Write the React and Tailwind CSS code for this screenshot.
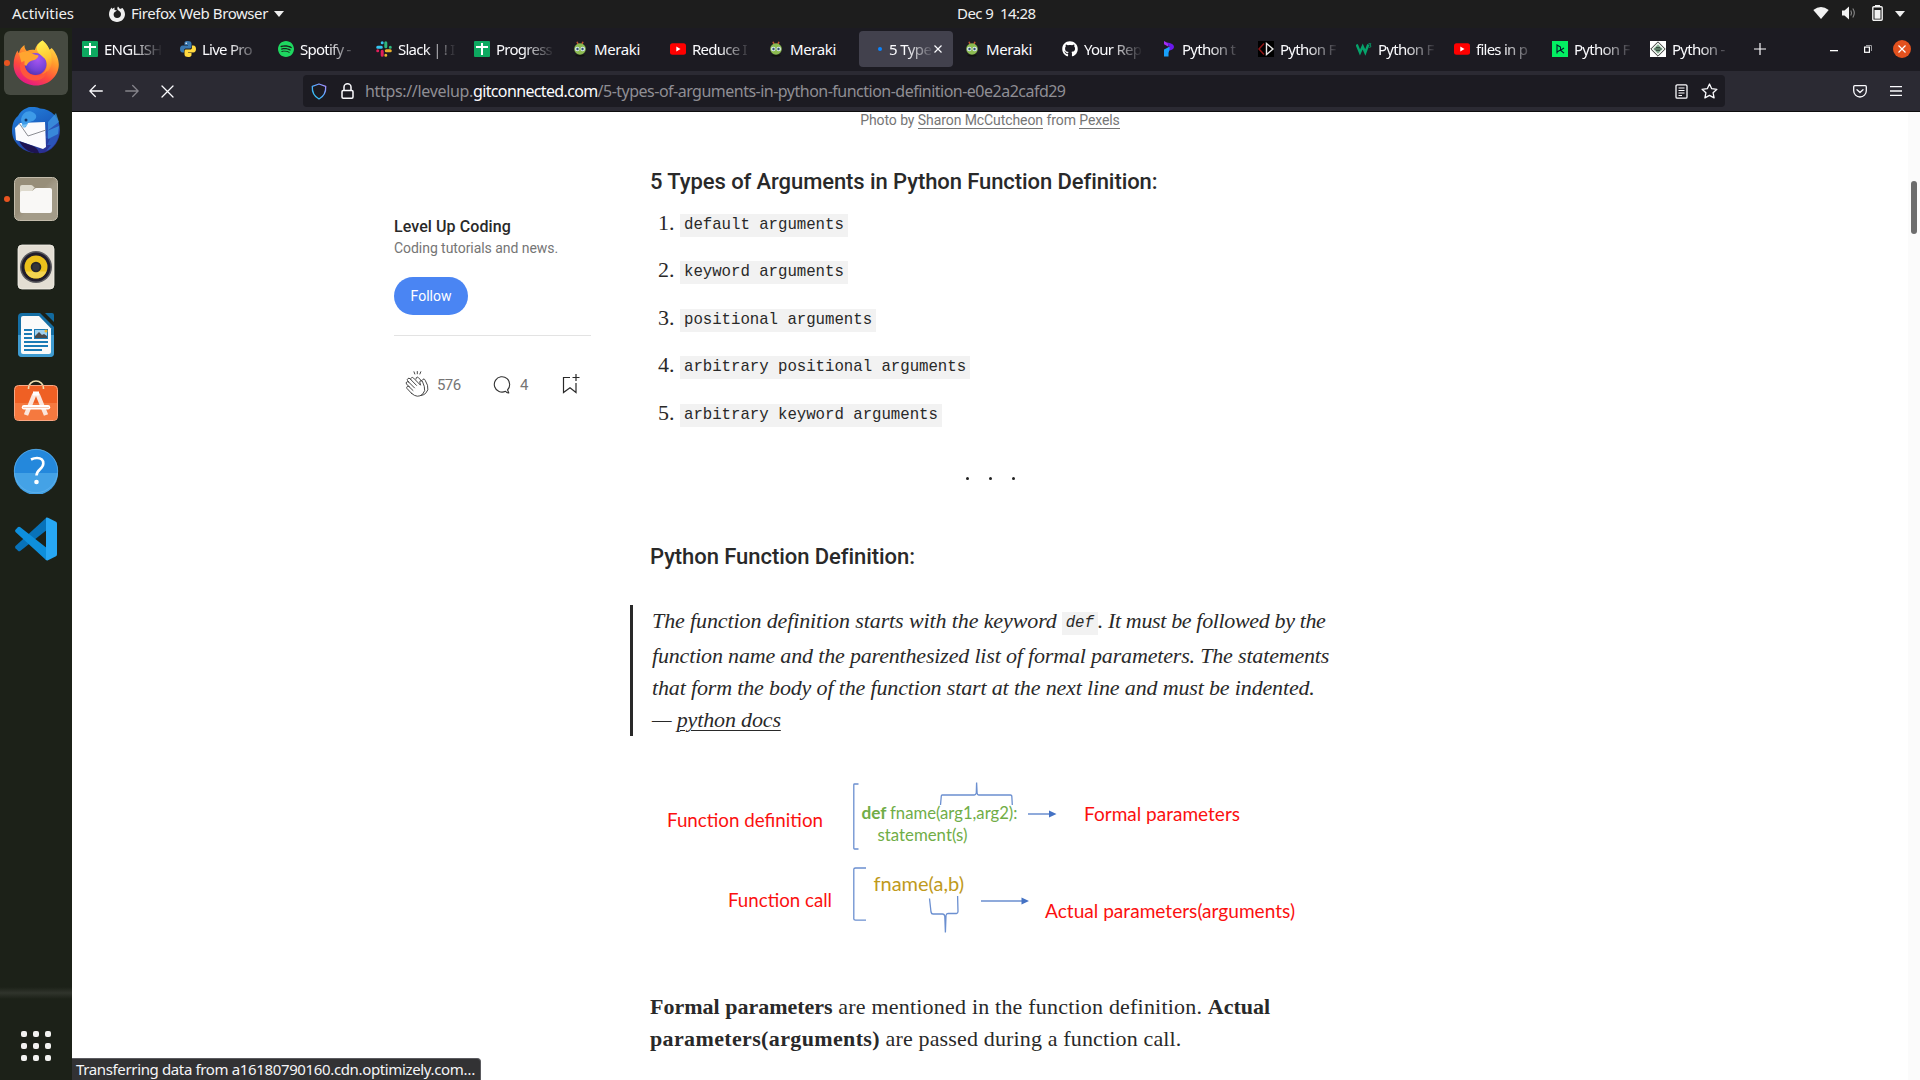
import React from "react";
import { FaGithub } from "react-icons/fa";
import { SiSpotify } from "react-icons/si";

const UI = "font-['Noto_Sans',sans-serif]";

/* ---------- dock icons ---------- */

function FirefoxIcon() {
  return (
    <svg width="48" height="48" viewBox="0 0 48 48">
      <defs>
        <linearGradient id="ffBody" x1="0.8" y1="0.05" x2="0.3" y2="1">
          <stop offset="0" stopColor="#ffe14a" />
          <stop offset="0.35" stopColor="#ff9a2c" />
          <stop offset="0.68" stopColor="#ff4a3d" />
          <stop offset="1" stopColor="#e3158a" />
        </linearGradient>
        <radialGradient id="ffGlobe" cx="0.6" cy="0.3" r="0.8">
          <stop offset="0" stopColor="#a655f0" />
          <stop offset="0.6" stopColor="#7543d6" />
          <stop offset="1" stopColor="#4a2fa8" />
        </radialGradient>
        <linearGradient id="ffFlame" x1="0.4" y1="0" x2="0.6" y2="1">
          <stop offset="0" stopColor="#fff250" />
          <stop offset="0.55" stopColor="#ffc733" />
          <stop offset="1" stopColor="#ff7a2e" />
        </linearGradient>
      </defs>
      <path d="M30.5 1.5c4 2.800 5.600 6 6.500 9.200 1.100-.4 2.100-.9 2.600-1.700 4.600 4.800 7.200 11 7.200 16.500 0 11.600-10 21-22.600 21S1.600 37.200 1.600 26c0-6.200 1.700-10.800 3.800-14.400.4 1 .8 2 1.500 2.700.7-3.800 2.600-6.200 5.500-8.300.1 2.700.8 4.700 2.400 5.900 2.500-1 5.400-1.300 8-.9 1-4 3.500-7.200 7.700-9.500z" fill="url(#ffBody)" />
      <circle cx="23.500" cy="25" r="11" fill="url(#ffGlobe)" />
      <path d="M30.500 1.500c8 7 9.500 14 9.200 22-.3 6-4.700 11-10.700 12.200 5-3 7-8 5.500-13-1-3.600-4.500-5-7.500-8.200-4-4.200-2-10 3.500-13z" fill="url(#ffFlame)" />
      <path d="M7 14.500c4-2.500 9.500-2.800 13.200.1 2.200 1.500 4.200 1.300 6.300 1.900-.2 2.600-3.200 4.600-6.500 5.100-2.400.6-4 2.400-5.600 5.200-2.600-.5-4.600-2.400-5.400-4.800z" fill="#ffa52f" />
      <path d="M12.500 22c-.6 9 4 14 11 14.500 5 .4 9-1.500 12-5-1 6-6 10-12.500 10-8 0-15-6-15-14 0-3 1.500-5 4.500-5.500z" fill="#ff5a3a" opacity="0.9" />
    </svg>
  );
}

function ThunderbirdIcon() {
  return (
    <svg width="48" height="48" viewBox="0 0 48 48">
      <defs>
        <linearGradient id="tbBody" x1="0.2" y1="0" x2="0.7" y2="1">
          <stop offset="0" stopColor="#2380dc" />
          <stop offset="0.5" stopColor="#1b5fc0" />
          <stop offset="1" stopColor="#2c2a8c" />
        </linearGradient>
      </defs>
      <path d="M15 1c4-2.200 10-.8 13 .4C40 2 48 11 48 23c0 10-6 19-14 22-1.500.7-5 1.500-8.500 1C12 46.500 0 36 0 24 0 17 2 12 6 9c2-4 5-6.500 9-8z" fill="url(#tbBody)" />
      <path d="M8 16l25-1 1 25-3 2L4 33l-1-12z" fill="#fbfbfd" />
      <path d="M7 16l9 13 18-6" fill="none" stroke="#8b8d93" strokeWidth="1" />
      <path d="M9 13C10 5 17 2 22 6c4 3 2 6-1 8-4 1-5 1-7 6-2 1-4-1-5-7z" fill="#3d9be8" />
      <path d="M9 18l3 3 4-4" fill="#7bc4f5" />
      <circle cx="14" cy="13" r="1.500" fill="#12356b" />
      <path d="M45 11c-5 2-8 4-10 8 1 4 0 8-1 12l4 1-3 6 4 0-5 6c8-3 13-11 13-20 0-5-1-9-2-13z" fill="#2b55b9" />
      <path d="M36 15l8-9 3 9-12 9 12-5-1 8-10 5" fill="#3d9ae4" opacity="0.75" />
      <path d="M7 34l14 5c4 2 5 4 6 7-8 1-16-4-20-12z" fill="#1e1451" />
    </svg>
  );
}

function FilesIcon() {
  return (
    <svg width="46" height="46" viewBox="0 0 46 46">
      <defs>
        <linearGradient id="flBody" x1="0" y1="0" x2="1" y2="1">
          <stop offset="0.450" stopColor="#978e79" />
          <stop offset="0.550" stopColor="#a39b88" />
        </linearGradient>
      </defs>
      <rect x="1.500" y="1.500" width="43" height="43" rx="5" fill="url(#flBody)" stroke="#c3bcab" />
      <path d="M7 11q0-2 2-2h9q1 0 1.700.8l2.300 2.200h-1l-3 5H7z" fill="#dedacd" />
      <path d="M7 17q0-2 2-2h9.500q1 0 1.800-1l1.200-1.200q.7-.8 2-.8H37q2 0 2 2v21q0 2-2 2H9q-2 0-2-2z" fill="#f9f8f6" />
    </svg>
  );
}

function MusicIcon() {
  return (
    <svg width="46" height="46" viewBox="0 0 46 46">
      <rect x="5" y="1" width="36" height="44" rx="4" fill="#e3ded3" stroke="#f4f1ea" strokeWidth="0.800" />
      <circle cx="23" cy="23" r="16" fill="#5c5c60" />
      <circle cx="23" cy="23" r="14.500" fill="#211d2b" />
      <circle cx="23" cy="23" r="11.500" fill="#ecc01c" />
      <path d="M12.500 27.500a11.500 11.500 0 0 0 21 0z" fill="#f3d450" />
      <circle cx="23" cy="23" r="5.300" fill="#26262b" />
      <circle cx="23" cy="23" r="3.500" fill="#34343a" />
    </svg>
  );
}

function WriterIcon() {
  return (
    <svg width="46" height="46" viewBox="0 0 46 46">
      <path d="M9 1h18l14 14v26q0 4-4 4H9q-4 0-4-4V5q0-4 4-4z" fill="#156fa5" />
      <path d="M5 23h36v18q0 4-4 4H9q-4 0-4-4z" fill="#3f9bd0" />
      <path d="M32 1h7q2 0 2 2v7z" fill="#126a9e" />
      <path d="M10 4h16l12 12.500V40q0 2-2 2H10q-2 0-2-2V6q0-2 2-2z" fill="#fafafa" />
      <g fill="#1a7ab5">
        <path d="M11 17h8v2h-8zM11 21h8v2h-8zM11 25h8v2h-8zM11 29h24v2H11zM11 33h24v2H11zM11 37h18v2H11z" />
        <path d="M21 17h14v10H21z" />
      </g>
      <path d="M22 18h12v8H22z" fill="#9fd0ee" />
      <path d="M22 26v-2l4-4 3 3 2-1 3 2v2z" fill="#4a4a4a" />
      <circle cx="33" cy="19" r="1.500" fill="#f0b429" />
    </svg>
  );
}

function SoftwareIcon() {
  return (
    <svg width="46" height="46" viewBox="0 0 46 46">
      <path d="M15.500 8a7.500 7 0 0 1 15 0" fill="none" stroke="#f0dfb0" strokeWidth="1.600" />
      <rect x="1.500" y="5.500" width="43" height="35" rx="4" fill="#ef6024" stroke="#f9a783" />
      <path d="M2 23h42v13.500q0 3.500-3.500 3.500h-35Q2 40 2 36.500z" fill="#f5793f" />
      <path d="M15.500 9a7.500 7 0 0 1 .5-3M30.500 9a7.500 7 0 0 0-.5-3" fill="none" stroke="#f0dfb0" strokeWidth="1.600" />
      <g fill="none" stroke="#fff" strokeLinecap="butt">
        <path d="M13 35l8.500-21M33 35l-8.500-21" strokeWidth="4.500" stroke="#fbe6dc" />
        <path d="M20 13.500h6" strokeWidth="4" />
        <path d="M11 27.300h24" strokeWidth="4.400" strokeLinecap="round" />
      </g>
      <path d="M10 27.500h26" stroke="#f6b393" strokeWidth="0.700" />
    </svg>
  );
}

function HelpIcon() {
  return (
    <svg width="46" height="46" viewBox="0 0 46 46">
      <circle cx="23" cy="23" r="22" fill="#2488dc" />
      <path d="M1 25a22 22 0 0 0 44 0z" fill="#44a2e6" />
      <circle cx="23" cy="23" r="21.700" fill="none" stroke="#64b4ee" strokeWidth="0.700" />
      <path d="M18 11.500q3-1.500 6-1.500c4 0 6.300 2.200 6.300 5.500 0 5.500-6.800 6-6.800 12" fill="none" stroke="#fff" strokeWidth="2.600" />
      <circle cx="23.500" cy="34" r="2.300" fill="#fff" />
    </svg>
  );
}

function CodeIcon() {
  return (
    <svg width="44" height="44" viewBox="0 0 44 44">
      <path d="M32 1L1.500 29q-1 1 0 2.200l2.500 2.600q1 1 2.200.2L34 12z" fill="#0872b9" />
      <path d="M34 32L6 10q-1.200-.8-2.200.2L1.500 12.800q-1 1 0 2.200L32 43z" fill="#0e8fdc" />
      <path d="M32 .8q.8-.5 2 0l8 4q1 .6 1 2v30.400q0 1.400-1 2l-8 4q-1.200.5-2.400-.4L32 42z" fill="#27a7f4" />
    </svg>
  );
}

const dockItems = [
  { Icon: FirefoxIcon, running: true, active: true },
  { Icon: ThunderbirdIcon },
  { Icon: FilesIcon, running: true },
  { Icon: MusicIcon },
  { Icon: WriterIcon },
  { Icon: SoftwareIcon },
  { Icon: HelpIcon },
  { Icon: CodeIcon },
];

function Dock() {
  return (
    <nav className="flex w-[72px] flex-col justify-between bg-[#1c2118]">
      <div className="flex flex-col pt-px">
        {dockItems.map(({ Icon, running, active }, i) => (
          <div key={i} className="flex h-[68px] items-center px-1">
            <div className={`relative flex h-16 w-16 items-center justify-center rounded-md ${active ? "bg-[#464a41]" : ""}`}>
              {running && <span className="absolute top-[29px] left-0 h-1.5 w-1.5 rounded-full bg-[#e95420]" />}
              <Icon />
            </div>
          </div>
        ))}
      </div>
      <div className="flex flex-col">
        <div className="h-3 bg-gradient-to-b from-[#1c2118] via-[#30342c] to-[#1c2118]" />
        <div className="grid grid-cols-3 gap-1.5 px-[21px] pt-8 pb-[19px]">
          {Array.from({ length: 9 }, (_, i) => (
            <span key={i} className="h-1.5 w-1.5 rounded-[2px] bg-[#f2f2f0]" />
          ))}
        </div>
      </div>
    </nav>
  );
}

/* ---------- favicons ---------- */

const SheetFav = () => (
  <svg width="16" height="16" viewBox="0 0 16 16">
    <rect width="16" height="16" rx="1" fill="#0da960" />
    <path d="M2 6h12M8 2v12" stroke="#fff" strokeWidth="2" />
  </svg>
);
const PythonFav = () => (
  <svg width="16" height="16" viewBox="0 0 16 16">
    <path d="M7.800 0C4.500 0 4.500 1.500 4.500 2.200V4H8v.6H2.500C1 4.600 0 5.800 0 8s1 3.600 2.500 3.600H4V9.500C4 8 5 7.500 6 7.500h3.800c1 0 1.700-.7 1.700-1.700V2.500C11.500.8 10 0 7.800 0z" fill="#3a78b0" />
    <path d="M8.200 16c3.300 0 3.300-1.500 3.300-2.200V12H8v-.6h5.500c1.500 0 2.500-1.200 2.500-3.400s-1-3.600-2.500-3.600H12v2.100C12 8 11 8.500 10 8.500H6.200c-1 0-1.700.7-1.700 1.700v3.300c0 1.700 1.500 2.500 3.700 2.500z" fill="#ffd93f" />
    <circle cx="6.200" cy="2.200" r=".8" fill="#fff" />
  </svg>
);
const SpotifyFav = () => (
  <span className="flex h-4 w-4 rounded-full bg-[#17231b] text-[#1ed760]">
    <SiSpotify size={16} />
  </span>
);
const SlackFav = () => (
  <svg width="16" height="16" viewBox="0 0 16 16" strokeWidth="3" strokeLinecap="round">
    <path d="M1.700 6.200h3.600M6.200 1.700v0" stroke="#36c5f0" />
    <path d="M9.800 1.700v4M14.300 6.200v0" stroke="#2eb67d" />
    <path d="M14.300 9.800h-4M9.800 14.300v0" stroke="#ecb22e" />
    <path d="M6.200 14.300v-4M1.700 9.800v0" stroke="#e01e5a" />
  </svg>
);
const MerakiFav = () => (
  <svg width="16" height="16" viewBox="0 0 16 16">
    <path d="M6.200 3.500L5 .7M9.800 3.500L11 .7" stroke="#c0502f" strokeWidth="1.600" />
    <ellipse cx="8" cy="14.500" rx="4.500" ry="1" fill="#11130f" />
    <ellipse cx="8" cy="8" rx="5.800" ry="5.700" fill="#8cba51" />
    <circle cx="5.300" cy="8" r="2.300" fill="#d9e8ef" />
    <circle cx="10.700" cy="8" r="2.300" fill="#d9e8ef" />
    <circle cx="5.500" cy="8" r="1.200" fill="#33516d" />
    <circle cx="10.500" cy="8" r="1.200" fill="#33516d" />
  </svg>
);
const YoutubeFav = () => (
  <svg width="16" height="16" viewBox="0 0 16 16">
    <rect y="2.300" width="16" height="11.400" rx="2.500" fill="#f00" />
    <path d="M6.300 5.500v5L10.500 8z" fill="#fff" />
  </svg>
);
const GithubFav = () => <FaGithub size={16} color="#fff" />;
const ProgrammizFav = () => (
  <svg width="16" height="16" viewBox="0 0 16 16">
    <path d="M4 0l4.500 2.500v3.200L4 3.200z" fill="#a32cf5" />
    <path d="M7 1.500c4 .5 7 2 7 4.500 0 2-2 3-4.500 3.500L7 10.500V7.200l2.500-1.500z" fill="#6a18ee" />
    <path d="M4 8.500l5.500-2.800v3L8.500 12v3.500H4z" fill="#18a0fb" />
  </svg>
);
const CodeFav = () => (
  <svg width="16" height="16" viewBox="0 0 16 16">
    <rect width="16" height="16" fill="#000" />
    <path d="M6 2.500L1 8l5 5.500" fill="none" stroke="#8f1515" strokeWidth="1.500" />
    <path d="M8.500 2.500v11L15 8z" fill="none" stroke="#e8e8e8" strokeWidth="1.400" />
  </svg>
);
const SchoolFav = () => (
  <svg width="16" height="16" viewBox="0 0 16 16" fill="none" stroke="#06a36b">
    <path d="M.7 3.500L4 11.500l2.700-6 2.600 6 3-8" strokeWidth="2.400" />
    <path d="M12.500 2.700h2.300l-1 1.500q1.500.2 1 1.600-.8 1-2.300.2" strokeWidth="0.900" />
  </svg>
);
const CampFav = () => (
  <svg width="16" height="16" viewBox="0 0 16 16">
    <rect width="16" height="16" fill="#03ef62" />
    <path d="M5 12.500V4l3.500 2v3L5 11M12 7L8.500 9.200l3.500 3" fill="none" stroke="#05192d" strokeWidth="1.100" />
  </svg>
);
const DiamondFav = () => (
  <svg width="16" height="16" viewBox="0 0 16 16">
    <rect width="16" height="16" fill="#fff" />
    <path d="M8 .8L15.200 8 8 15.200.8 8z" fill="#e9efe9" stroke="#222" strokeWidth="0.900" />
    <path d="M8 3.500L12.500 8 8 12.500 3.500 8z" fill="#7ea78c" />
    <path d="M4.500 8h7M6 6.500h4M6 9.500h4" stroke="#33463a" strokeWidth="0.900" />
  </svg>
);

const tabs = [
  { Fav: SheetFav, label: "ENGLISH" },
  { Fav: PythonFav, label: "Live Pro" },
  { Fav: SpotifyFav, label: "Spotify -" },
  { Fav: SlackFav, label: "Slack | ! I" },
  { Fav: SheetFav, label: "Progress" },
  { Fav: MerakiFav, label: "Meraki" },
  { Fav: YoutubeFav, label: "Reduce I" },
  { Fav: MerakiFav, label: "Meraki" },
  { label: "5 Type", active: true },
  { Fav: MerakiFav, label: "Meraki" },
  { Fav: GithubFav, label: "Your Rep" },
  { Fav: ProgrammizFav, label: "Python t" },
  { Fav: CodeFav, label: "Python F" },
  { Fav: SchoolFav, label: "Python F" },
  { Fav: YoutubeFav, label: "files in p" },
  { Fav: CampFav, label: "Python F" },
  { Fav: DiamondFav, label: "Python -" },
];

function Tab({ Fav, label, active }) {
  const fade = active
    ? "w-[45px] tracking-[-0.6px] [mask-image:linear-gradient(to_right,#000_40%,transparent)]"
    : label === "Meraki"
      ? "w-[58px] tracking-[-0.38px]"
      : "w-[60px] tracking-[-0.75px] [mask-image:linear-gradient(to_right,#000_45%,transparent_98%)]";
  return (
    <div className={`flex h-9 w-[94px] shrink-0 items-center rounded pl-[7px] ${active ? "bg-[#42414d]" : ""}`}>
      <span className="mr-1.5 flex h-4 w-4 shrink-0 items-center justify-center">
        {active ? <span className="ml-[11px] h-1 w-1 rounded-full bg-[#0a84ff]" /> : <Fav />}
      </span>
      <span className={`text-[15px] leading-5 whitespace-nowrap text-[#fbfbfe] ${active ? "ml-px" : ""} ${fade}`}>
        {label}
      </span>
      {active && (
        <svg width="8" height="8" viewBox="0 0 8 8" className="shrink-0" stroke="#fbfbfe" strokeWidth="1.200">
          <path d="M.5.5l7 7M7.500.5l-7 7" />
        </svg>
      )}
    </div>
  );
}

function TopBar() {
  return (
    <header className="flex h-7 items-center justify-between bg-[#1d1d1d] pb-0.5 text-[15px] leading-6 text-[#f0f0f0]">
      <div className="flex w-[957px] items-center pl-3">
        <span className="tracking-[-0.05px]">Activities</span>
        <svg className="mt-px ml-[35px]" width="16" height="16" viewBox="0 0 16 16">
          <path d="M9 .5l2 2.500 2.500-1C15 4 16 6 16 8.300 16 12.600 12.500 16 8 16s-8-3.300-8-7.700C0 5.500 1 3 3 1.500V3l2.500-1.500L5.500 4l2.500.5L5.500 6.300C4 7.500 4.300 12 8 12c2.500 0 4-1.600 4-4 0-1.500-1-2.500-2.500-3.500S8 2 9 .5z" fill="#efefef" />
        </svg>
        <span className="ml-[6px] tracking-[-0.43px]">Firefox Web Browser</span>
        <svg className="mt-px ml-1.5" width="10" height="6" viewBox="0 0 10 6"><path d="M0 0h10L5 6z" fill="#efefef" /></svg>
      </div>
      <div className="grow tracking-[-0.56px] whitespace-pre">Dec 9  14:28</div>
      <div className="flex items-center pr-[15px]">
        <svg width="16" height="12" viewBox="0 0 16 12"><path d="M8 12L.3 3Q8-3 15.700 3z" fill="#f2f2f2" /></svg>
        <svg className="ml-3" width="16" height="14" viewBox="0 0 16 14">
          <path d="M1 4.500h2.500L8 .5v13L3.500 9.500H1z" fill="#f2f2f2" />
          <path d="M9.800 4.500q1.500 2.500 0 5M11.800 2.500q3 4.500 0 9" fill="none" stroke="#8a8a8a" strokeWidth="1.100" />
        </svg>
        <svg className="ml-[15px]" width="11" height="16" viewBox="0 0 11 16">
          <rect x="3" width="5" height="2" fill="#f2f2f2" />
          <rect x="0.800" y="1.800" width="9.400" height="13.400" rx="1" fill="none" stroke="#f2f2f2" strokeWidth="1.400" />
          <rect x="2.500" y="5" width="6" height="8.700" fill="#f2f2f2" />
        </svg>
        <svg className="mt-px ml-3" width="10" height="6" viewBox="0 0 10 6"><path d="M0 0h10L5 6z" fill="#efefef" /></svg>
      </div>
    </header>
  );
}

function TabStrip() {
  return (
    <div className="flex h-[43px] items-center bg-[#1c1b22] pb-0.5 pl-[3px]">
      <div className="flex gap-1">
        {tabs.map((t, i) => <Tab key={i} {...t} />)}
      </div>
      <svg className="ml-[17px]" width="12" height="12" viewBox="0 0 12 12" stroke="#fbfbfe" strokeWidth="1.200"><path d="M6 0v12M0 6h12" /></svg>
      <svg className="mt-1 ml-[64px]" width="8" height="2" viewBox="0 0 8 2"><path d="M0 0h8v1.300H0z" fill="#fff" /></svg>
      <svg className="ml-[26px]" width="8" height="8" viewBox="0 0 8 8" fill="none">
        <path d="M2 .5h5.500V6" stroke="#9a9a9e" />
        <rect x="0.600" y="2.100" width="4.800" height="5.200" stroke="#fff" strokeWidth="1.200" />
      </svg>
      <span className="ml-[21px] flex h-[18px] w-[18px] items-center justify-center rounded-full bg-[#e2511e]">
        <svg width="8" height="8" viewBox="0 0 8 8" stroke="#fff" strokeWidth="1.200"><path d="M.5.5l7 7M7.500.5l-7 7" /></svg>
      </span>
    </div>
  );
}

function Toolbar() {
  return (
    <div className="flex h-[41px] items-center border-b border-[#0c0c0d] bg-[#2b2a33]">
      <div className="flex w-[231px] items-center gap-[22px] pl-[17px]">
        <svg width="14" height="14" viewBox="0 0 14 14" fill="none" stroke="#fbfbfe" strokeWidth="1.300" strokeLinecap="round"><path d="M13.300 7H1M6.300 1.500L.8 7l5.500 5.500" /></svg>
        <svg width="14" height="14" viewBox="0 0 14 14" fill="none" stroke="#85848b" strokeWidth="1.300" strokeLinecap="round"><path d="M.7 7H13M7.700 1.500L13.200 7l-5.500 5.500" /></svg>
        <svg width="13" height="13" viewBox="0 0 13 13" fill="none" stroke="#fbfbfe" strokeWidth="1.300" strokeLinecap="round"><path d="M1 1l11 11M12 1L1 12" /></svg>
      </div>
      <div className="flex h-8 w-[1422px] items-center rounded bg-[#1c1b22] pl-2">
        <svg width="16" height="17" viewBox="0 0 16 17">
          <defs>
            <linearGradient id="shield" x1="1" y1="0" x2="0" y2="1">
              <stop offset="0" stopColor="#b08cff" />
              <stop offset="0.450" stopColor="#5aa8ff" />
              <stop offset="1" stopColor="#22c8ee" />
            </linearGradient>
          </defs>
          <path d="M8 1l6.700 2.300c.3 5-1.500 10-6.700 12.700C2.800 13.300 1 8.300 1.300 3.300z" fill="none" stroke="url(#shield)" strokeWidth="1.300" strokeLinejoin="round" />
        </svg>
        <svg className="ml-3.5" width="13" height="16" viewBox="0 0 13 16" fill="none" stroke="#fbfbfe" strokeWidth="1.500">
          <rect x="1" y="7.500" width="11" height="7.700" rx="1.200" />
          <path d="M3 7.500V4a3.500 3.200 0 0 1 7 0v3.500" />
        </svg>
        <span className="ml-[11px] flex grow text-[16px] leading-6 text-[#8f8e94]">
          <span className="tracking-[-0.33px]">https://levelup.</span>
          <span className="tracking-[-0.64px] text-[#fbfbfe]">gitconnected.com</span>
          <span className="tracking-[-0.51px]">/5-types-of-arguments-in-python-function-definition-e0e2a2cafd29</span>
        </span>
        <svg width="13" height="15" viewBox="0 0 13 15" fill="none" stroke="#fbfbfe">
          <rect x="1" y="0.800" width="11" height="13.400" rx="1.200" strokeWidth="1.300" />
          <path d="M3.500 4h6M3.500 6.500h6M3.500 9h6M3.500 11.500h3.500" strokeWidth="1.100" />
        </svg>
        <svg className="mr-[7px] ml-[13px]" width="17" height="16" viewBox="0 0 17 16" fill="none" stroke="#fbfbfe" strokeWidth="1.300" strokeLinejoin="round">
          <path d="M8.500 1l2.200 4.700 5.200.6-3.800 3.500 1 5.100-4.600-2.500-4.600 2.500 1-5.100L1.100 6.300l5.200-.6z" />
        </svg>
      </div>
      <svg className="ml-[128px]" width="14" height="13" viewBox="0 0 14 13" fill="none" stroke="#fbfbfe" strokeWidth="1.300" strokeLinecap="round" strokeLinejoin="round">
        <path d="M1.700.7h10.600q1 0 1 1v4a6.300 6.300 0 0 1-12.600 0v-4q0-1 1-1zM4 4.700l3 2.800 3-2.800" />
      </svg>
      <svg className="ml-[23px]" width="12" height="10" viewBox="0 0 12 10" stroke="#fbfbfe" strokeWidth="1.300"><path d="M0 .7h12M0 5h12M0 9.300h12" /></svg>
    </div>
  );
}

/* ---------- page ---------- */

function Sidebar() {
  return (
    <aside className="flex w-[197px] shrink-0 flex-col pt-[103px] font-['Roboto',sans-serif] text-[#757575]">
      <h2 className="text-[16px] leading-6 font-medium tracking-[0.08px] text-[#292929]">Level Up Coding</h2>
      <p className="-mt-px text-[14px] leading-5 tracking-[-0.05px]">Coding tutorials and news.</p>
      <button className="mt-[19px] flex h-[38px] w-[74px] items-center justify-center rounded-full bg-[#4a85f3] text-[14px] leading-5 text-white">Follow</button>
      <div className="mt-5 h-px bg-[#e3e3e3]" />
      <div className="flex items-center pt-[33px] pl-[11px] text-[15px] leading-7">
        <svg width="25" height="27" viewBox="0 0 25 27" fill="none" stroke="#333" strokeWidth="0.900" strokeLinecap="round" strokeLinejoin="round">
          <path d="M9 .8l.8 2.200M12.300.5v2.300M15.800.8L14.900 3" />
          <path d="M6.700 22.500L2 17.500q-.8-1.200.3-2 1-.6 2 .4L1.500 13q-.8-1.200.2-2t2.100.2L2.500 9.500q-.6-1.300.5-2t2 .3l.8.8q-.3-1.500.8-2t2 .5l6.900 7.100-.7-3q0-1.600 1.200-1.600t1.600 1.300l1.700 4.600q1.500 4.500-1.700 7.700-5 4.500-10.900-.7z" />
          <path d="M4.300 15.900l3.700 3.600M3.800 11.200l5.700 5.700M5.800 8.600l5.700 5.800" />
          <path d="M11 8l.3-1.300q.8-1.200 2-.2l3.500 3.700M17.500 9q.3-1.300 1.500-1 .8.300 1.200 1.300l2.300 5q1.700 5-2 8.200-2 1.700-4.500 2" />
        </svg>
        <span className="ml-[7px] w-[24px] pt-px tracking-[-0.6px]">576</span>
        <svg className="mt-0.5 ml-8" width="18" height="18" viewBox="0 0 18 18" fill="none" stroke="#333" strokeWidth="1.100" strokeLinejoin="round">
          <path d="M12.500 15.300A7.700 7.700 0 1 1 16.700 8.600q0 3.200-2.200 5.200l1.300 3.200q-2 .3-3.300-1.700z" />
        </svg>
        <span className="ml-[9px] pt-0.5">4</span>
        <svg className="mb-0.5 ml-[34px]" width="18" height="21" viewBox="0 0 18 21" fill="none" stroke="#292929" strokeWidth="1.200">
          <path d="M8 4.500H1.500v15L8 14.700l6 4.800V10M14 1v7M10.500 4.500h7" />
        </svg>
      </div>
    </aside>
  );
}

const args = [
  "default arguments",
  "keyword arguments",
  "positional arguments",
  "arbitrary positional arguments",
  "arbitrary keyword arguments",
];

function Diagram() {
  return (
    <svg className="mt-[34px] block" width="680" height="180" viewBox="650 770 680 180" fontFamily="Lato, sans-serif" fontSize="18.500">
      <g fill="#fb1010">
        <text x="667" y="827" textLength="156" lengthAdjust="spacingAndGlyphs">Function definition</text>
        <text x="728" y="907" textLength="104" lengthAdjust="spacingAndGlyphs">Function call</text>
        <text x="1084" y="820.500" textLength="156" lengthAdjust="spacingAndGlyphs">Formal parameters</text>
        <text x="1045" y="917.500" textLength="250" lengthAdjust="spacingAndGlyphs">Actual parameters(arguments)</text>
      </g>
      <g fill="#70ad47" fontSize="17">
        <text x="861.500" y="819" textLength="25" lengthAdjust="spacingAndGlyphs" fontWeight="700">def</text>
        <text x="890" y="819" textLength="127.500" lengthAdjust="spacingAndGlyphs">fname(arg1,arg2):</text>
        <text x="877.500" y="841" textLength="90" lengthAdjust="spacingAndGlyphs">statement(s)</text>
      </g>
      <text x="873.500" y="890.500" textLength="90.500" lengthAdjust="spacingAndGlyphs" fill="#c09a1c">fname(a,b)</text>
      <g fill="none" stroke="#6b8fd0" strokeWidth="1.300">
        <path d="M858.500 784h-4q-.7 0-.7.700v63.600q0 .7.700.7h4" />
        <path d="M866 868h-10.500q-1.700.2-1.700 1.200V919q0 1 1.700 1.200H866" />
        <path d="M940.500 805l.8-9q0-1 1-1h32q1.500 0 2-2l.3-10.500.5 10.500q.3 2 1.500 2h32q1 0 1.200 1l.5 9" />
        <path d="M929.500 898.500l1.500 13.500q.4 2 2 2h9.500q2 0 2.300 2.500l.6 16 .6-17q.3-2 2-2h8.500q1.500-.2 1.500-2l-.4-15.500" />
        <path d="M1028 814h22M981 901h42" />
      </g>
      <path d="M1049 810.500l7.500 3.500-7.500 3.500zM1021.500 897.500l7.500 3.500-7.500 3.500z" fill="#4472c4" />
    </svg>
  );
}

function Article() {
  return (
    <article className="flex w-[680px] shrink-0 flex-col font-['Liberation_Serif',serif] text-[22px] leading-8 text-[#292929]">
      <p className="-mt-0.5 text-center font-['Roboto',sans-serif] text-[14px] leading-5 tracking-[-0.08px] text-[#757575]">
        Photo by <a className="border-b border-[#757575]">Sharon McCutcheon</a> from <a className="border-b border-[#757575]">Pexels</a>
      </p>
      <h1 className="mt-9 font-['Roboto',sans-serif] text-[22px] leading-8 font-medium tracking-[-0.08px] whitespace-nowrap">
        5 Types of Arguments in Python Function Definition:
      </h1>
      <ol className="mt-[9px] flex flex-col">
        {args.map((a, i) => (
          <li key={a} className="flex h-[47.4px] items-start pl-2">
            <span className="w-[22px]">{i + 1}.</span>
            <code className="mt-[7px] h-[23px] bg-[#f2f2f2] px-1 font-['Liberation_Mono',monospace] text-[15.75px] leading-[23px] tracking-[-0.05px]">{a}</code>
          </li>
        ))}
      </ol>
      <div className="mt-[33px] flex justify-center gap-5">
        <span className="h-[3px] w-[3px] rounded-full bg-[#222]" />
        <span className="h-[3px] w-[3px] rounded-full bg-[#222]" />
        <span className="h-[3px] w-[3px] rounded-full bg-[#222]" />
      </div>
      <h1 className="mt-[61px] font-['Roboto',sans-serif] text-[22px] leading-8 font-medium tracking-[-0.06px]">
        Python Function Definition:
      </h1>
      <blockquote className="mt-8 -ml-5 border-l-[3px] border-[#292929] pl-[19px] whitespace-nowrap italic">
        <p className="flex h-[35px]">
          <span className="tracking-[-0.11px]">The function definition starts with the keyword</span>
          <code className="mt-[7px] ml-[5px] h-[23px] w-9 bg-[#f2f2f2] px-1 font-['Liberation_Mono',monospace] text-[15.75px] leading-[23px]">def</code>
          <span className="tracking-[-0.35px]">. It must be followed by the</span>
        </p>
        <p className="tracking-[-0.17px]">function name and the parenthesized list of formal parameters. The statements</p>
        <p className="tracking-[-0.15px]">that form the body of the function start at the next line and must be indented.</p>
        <p className="tracking-[-0.15px]">— <a className="underline decoration-1 underline-offset-[3px]">python docs</a></p>
      </blockquote>
      <Diagram />
      <p className="mt-[41px] whitespace-nowrap">
        <b>Formal parameters</b><span className="tracking-[0.2px]"> are mentioned in the function definition. </span><b>Actual</b>
        <br />
        <b className="tracking-[0.36px]">parameters(arguments)</b><span className="tracking-[0.15px]"> are passed during a function call.</span>
      </p>
    </article>
  );
}

export default function App() {
  return (
    <div className={`flex h-[1080px] w-[1920px] flex-col overflow-hidden bg-white ${UI}`}>
      <TopBar />
      <div className="flex min-h-0 grow">
        <Dock />
        <div className="flex min-w-0 grow flex-col">
          <TabStrip />
          <Toolbar />
          <main className="relative flex min-h-0 grow overflow-hidden bg-white pl-[322px]">
            <Sidebar />
            <div className="w-[59px] shrink-0" />
            <Article />
            <div className="ml-auto w-3 bg-[#fbfbfb] pt-[69px] pl-[3px]">
              <div className="h-[53px] w-1.5 rounded-full bg-[#6d6d6d]" />
            </div>
            <div className="absolute bottom-0 left-0 h-[22px] w-[409px] rounded-tr border-t border-r border-[#5b5b60] bg-[#323234] pl-1 text-[15px] leading-[21px] tracking-[-0.36px] whitespace-nowrap text-[#f5f5f7]">
              Transferring data from a16180790160.cdn.optimizely.com…
            </div>
          </main>
        </div>
      </div>
    </div>
  );
}
